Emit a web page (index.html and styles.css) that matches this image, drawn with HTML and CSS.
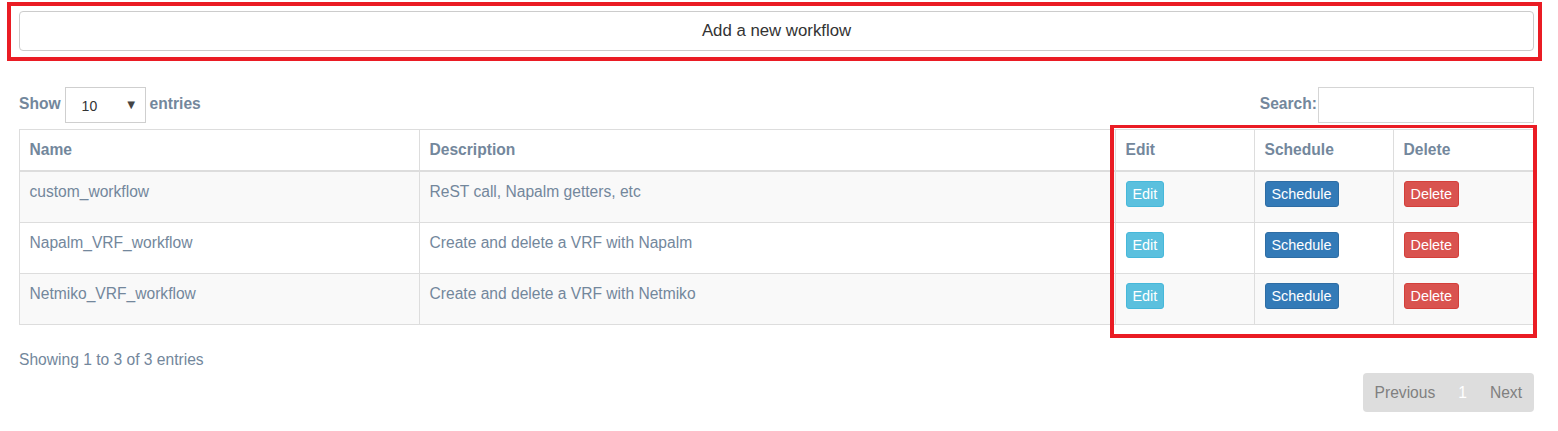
FILE: index.html
```html
<!DOCTYPE html>
<html>
<head>
<meta charset="utf-8">
<link rel="stylesheet" href="styles.css">
</head>
<body>
<div class="highlight-top">
  <button class="add-btn">Add a new workflow</button>
</div>

<div class="content">
  <div class="controls">
    <div class="length">
      <span class="label">Show</span>
      <div class="select"><span class="select-value">10</span><span class="select-arrow">&#9660;</span></div>
      <span class="label">entries</span>
    </div>
    <div class="search">
      <span class="label">Search:</span>
      <div class="search-input"></div>
    </div>
  </div>

  <div class="table-wrap">
    <table class="wf-table">
      <colgroup>
        <col class="c-name">
        <col class="c-desc">
        <col class="c-edit">
        <col class="c-sched">
        <col class="c-del">
      </colgroup>
      <thead>
        <tr>
          <th>Name</th>
          <th>Description</th>
          <th>Edit</th>
          <th>Schedule</th>
          <th>Delete</th>
        </tr>
      </thead>
      <tbody>
        <tr class="odd">
          <td>custom_workflow</td>
          <td>ReST call, Napalm getters, etc</td>
          <td><span class="btn btn-info">Edit</span></td>
          <td><span class="btn btn-primary">Schedule</span></td>
          <td><span class="btn btn-danger">Delete</span></td>
        </tr>
        <tr>
          <td>Napalm_VRF_workflow</td>
          <td>Create and delete a VRF with Napalm</td>
          <td><span class="btn btn-info">Edit</span></td>
          <td><span class="btn btn-primary">Schedule</span></td>
          <td><span class="btn btn-danger">Delete</span></td>
        </tr>
        <tr class="odd">
          <td>Netmiko_VRF_workflow</td>
          <td>Create and delete a VRF with Netmiko</td>
          <td><span class="btn btn-info">Edit</span></td>
          <td><span class="btn btn-primary">Schedule</span></td>
          <td><span class="btn btn-danger">Delete</span></td>
        </tr>
      </tbody>
    </table>
    <div class="highlight-cols"></div>
  </div>

  <div class="info">Showing 1 to 3 of 3 entries</div>
  <div class="paginate-row">
    <div class="paginate">
      <span class="pg-btn">Previous</span>
      <span class="pg-btn pg-current">1</span>
      <span class="pg-btn">Next</span>
    </div>
  </div>
</div>
</body>
</html>
```

FILE: styles.css
```css
html, body {
  margin: 0;
  padding: 0;
  background: #ffffff;
}

body {
  font-family: "Liberation Sans", Arial, Helvetica, sans-serif;
  font-size: 15.6px;
  line-height: 22px;
  color: #73879C;
}

.highlight-top {
  box-sizing: border-box;
  margin: 2px 0 0 7px;
  width: 1535px;
  border: 4px solid #ea1c24;
  padding: 5px 4px 6px 8px;
}

.add-btn {
  display: block;
  box-sizing: border-box;
  width: 1515px;
  height: 40px;
  margin: 0;
  padding: 0;
  background: #ffffff;
  border: 1px solid #cccccc;
  border-radius: 4px;
  font-family: "Liberation Sans", Arial, Helvetica, sans-serif;
  font-size: 16.8px;
  color: #333333;
  text-align: center;
}

.content {
  width: 1515px;
  margin-left: 19px;
}

.controls {
  display: flex;
  justify-content: space-between;
  align-items: center;
  margin-top: 26px;
  height: 36px;
}

.length, .search {
  display: flex;
  align-items: center;
}

.label {
  font-weight: bold;
  margin-top: -3px;
}

.select {
  box-sizing: border-box;
  width: 81px;
  height: 36px;
  margin: 0 4px;
  border: 1px solid #cfcfcf;
  background: #ffffff;
  display: flex;
  align-items: center;
  justify-content: space-between;
  padding: 0 7px 0 16px;
  color: #333333;
  font-size: 14px;
}

.select-value {
  margin-top: 2px;
}

.select-arrow {
  font-size: 13px;
  color: #444444;
}

.search-input {
  box-sizing: border-box;
  width: 216px;
  height: 36px;
  margin-left: 1px;
  border: 1px solid #d5d5d5;
  background: #ffffff;
}

.table-wrap {
  position: relative;
  margin-top: 6px;
}

.wf-table {
  width: 1515px;
  table-layout: fixed;
  border-collapse: collapse;
  border: 1px solid #dddddd;
}

.c-name { width: 400px; }
.c-desc { width: 696px; }
.c-edit { width: 139px; }
.c-sched { width: 139px; }
.c-del { width: 140px; }

.wf-table th,
.wf-table td {
  border: 1px solid #dddddd;
  padding: 9px 10px 9px 9.5px;
  text-align: left;
  vertical-align: top;
  line-height: 22px;
}

.wf-table th {
  font-weight: bold;
  border-bottom: 2px solid #dddddd;
  background: #ffffff;
}

.wf-table tbody tr {
  background: #ffffff;
}

.wf-table tbody tr.odd {
  background: #f9f9f9;
}

.btn {
  display: inline-block;
  vertical-align: top;
  box-sizing: border-box;
  height: 26px;
  line-height: 24px;
  padding: 0 6px;
  margin-bottom: 6px;
  font-size: 14.4px;
  color: #ffffff;
  border: 1px solid transparent;
  border-radius: 3px;
}

.btn-info {
  background: #5bc0de;
  border-color: #46b8da;
}

.btn-primary {
  background: #337ab7;
  border-color: #2e6da4;
}

.btn-danger {
  background: #d9534f;
  border-color: #d43f3a;
}

.highlight-cols {
  position: absolute;
  left: 1091px;
  top: -4px;
  width: 427px;
  height: 213px;
  box-sizing: border-box;
  border: 4px solid #ea1c24;
  border-top-width: 3px;
}

.info {
  margin-top: 24px;
}

.paginate-row {
  display: flex;
  justify-content: flex-end;
  margin-top: 2px;
}

.paginate {
  display: flex;
  height: 39px;
  line-height: 39px;
  background: #dddddd;
  border-radius: 4px;
  color: #808080;
}

.pg-btn {
  padding: 0 12px;
}

.pg-current {
  color: #ffffff;
  padding: 0 11px;
}
```
